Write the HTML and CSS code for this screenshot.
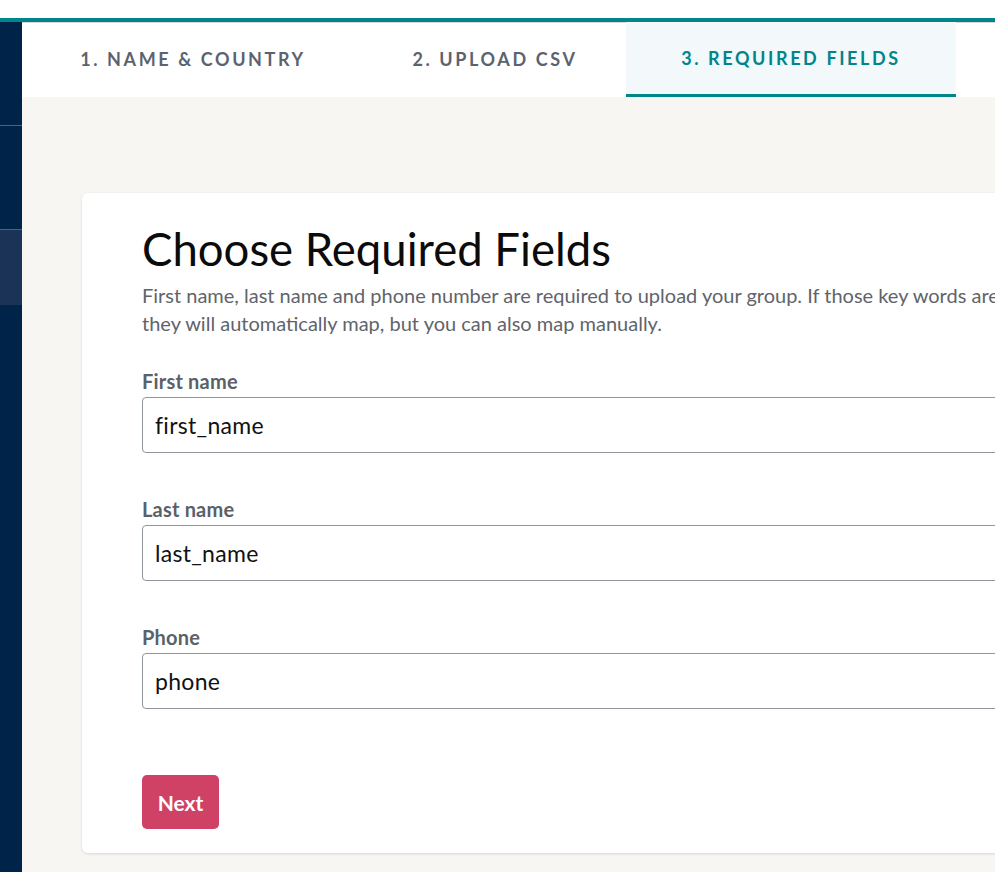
FILE: index.html
```html
<!DOCTYPE html>
<html lang="en">
<head>
    <meta charset="UTF-8">
    <title>Upload Group</title>
    <link rel="stylesheet" href="styles.css">
</head>
<body>
    <div class="top-strip"></div>
    <div class="app">
        <nav class="sidebar">
            <div class="side-item"></div>
            <div class="side-item active"></div>
        </nav>

        <main class="main">
            <div class="steps">
                <div class="step">1. Name &amp; Country</div>
                <div class="step">2. Upload CSV</div>
                <div class="step current">3. Required Fields</div>
            </div>

            <div class="content">
                <div class="card">
                    <h1 class="card-title">Choose Required Fields</h1>
                    <p class="card-text">First name, last name and phone number are required to upload your group. If those key words are in your CSV headers,<br>they will automatically map, but you can also map manually.</p>

                    <div class="field">
                        <label for="first-name">First name</label>
                        <input type="text" id="first-name" value="first_name">
                    </div>
                    <div class="field">
                        <label for="last-name">Last name</label>
                        <input type="text" id="last-name" value="last_name">
                    </div>
                    <div class="field">
                        <label for="phone">Phone</label>
                        <input type="text" id="phone" value="phone">
                    </div>

                    <button class="btn-next">Next</button>
                </div>
            </div>
        </main>
    </div>
</body>
</html>
```

FILE: styles.css
```css
body {
    margin: 0;
    padding: 0;
    overflow: hidden;
    font-family: Lato, "Noto Sans", sans-serif;
    background-color: #ffffff;
    height: 872px;
}

.top-strip {
    height: 18px;
    background-color: #ffffff;
    border-bottom: 4px solid #00858a;
}

.app {
    display: flex;
    height: 850px;
}

.sidebar {
    width: 22px;
    flex-shrink: 0;
    background-color: #00234a;
    padding-top: 103px;
}

.side-item {
    height: 104px;
    border-top: 1px solid #51627c;
    box-sizing: border-box;
}

.side-item.active {
    height: 76px;
    background-color: #1c3358;
}

.main {
    flex: 1;
    min-width: 0;
    display: flex;
    flex-direction: column;
    overflow: hidden;
}

.steps {
    display: flex;
    height: 75px;
    background-color: #ffffff;
    box-shadow: inset 0 1px 0 #d5d7da;
}

.step {
    display: flex;
    align-items: center;
    justify-content: center;
    padding-bottom: 2px;
    text-transform: uppercase;
    letter-spacing: 2.6px;
    font-weight: 700;
    font-size: 18px;
    color: #5c6370;
    box-sizing: border-box;
}

.step:nth-child(1) {
    width: 342px;
}

.step:nth-child(2) {
    width: 262px;
}

.step.current {
    width: 330px;
    color: #00858a;
    background-color: #f3f8fa;
    border-bottom: 3px solid #00858a;
    padding-bottom: 0;
}

.content {
    flex: 1;
    background-color: #f7f6f3;
    padding: 96px 0 0 60px;
}

.card {
    width: 1260px;
    height: 660px;
    box-sizing: border-box;
    background-color: #ffffff;
    border-radius: 6px;
    box-shadow: 0 1px 3px rgba(0, 0, 0, 0.12);
    padding: 28px 60px;
}

.card-title {
    margin: 0;
    font-size: 45.5px;
    font-weight: 400;
    color: #0b0b0b;
    line-height: 56px;
}

.card-text {
    margin: 4px 0 31px 0;
    font-size: 20px;
    line-height: 28px;
    color: #5f646b;
}

.field {
    margin-bottom: 43px;
}

.field label {
    display: block;
    font-size: 20px;
    font-weight: 700;
    letter-spacing: 0.2px;
    color: #5a6169;
    line-height: 26px;
    margin-bottom: 3px;
}

.field input {
    display: block;
    width: 100%;
    height: 56px;
    box-sizing: border-box;
    border: 1px solid #8f959b;
    border-radius: 4px;
    padding: 0 12px;
    font-family: Lato, "Noto Sans", sans-serif;
    font-size: 23px;
    letter-spacing: 0.3px;
    color: #111111;
    background-color: #ffffff;
}

.btn-next {
    margin-top: 23px;
    width: 77px;
    height: 54px;
    border: none;
    border-radius: 5px;
    background-color: #d04265;
    color: #ffffff;
    font-family: Lato, "Noto Sans", sans-serif;
    font-size: 21px;
    font-weight: 700;
    cursor: pointer;
}
```
